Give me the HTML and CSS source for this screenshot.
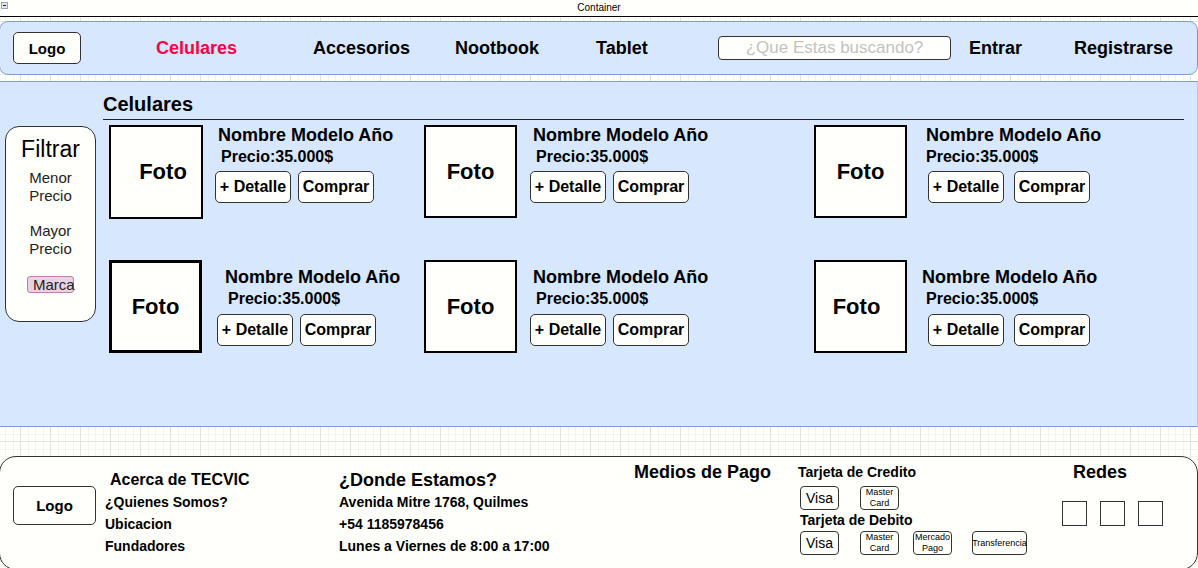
FILE: index.html
```html
<!DOCTYPE html>
<html lang="es">
<head>
<meta charset="utf-8">
<meta name="viewport" content="width=device-width, initial-scale=1">
<title>TECVIC - Celulares</title>
<link rel="stylesheet" href="styles.css">
</head>
<body>
<div class="page">
  <div class="titlebar">
    <svg class="collapse" viewBox="0 0 7 7" aria-hidden="true"><rect x="0.5" y="0.5" width="6" height="6" fill="#dfe6ee" stroke="#9aa8b8"/><path d="M2 3.5h3" stroke="#222"/></svg>
    <span>Container</span>
  </div>

  <header class="header">
    <a class="logo" href="#">Logo</a>
    <a class="nav-link nav-link--active" href="#">Celulares</a>
    <a class="nav-link" href="#">Accesorios</a>
    <a class="nav-link" href="#">Nootbook</a>
    <a class="nav-link" href="#">Tablet</a>
    <input class="search" type="text" aria-label="Buscar" placeholder="¿Que Estas buscando?">
    <a class="nav-link" href="#">Entrar</a>
    <a class="nav-link" href="#">Registrarse</a>
  </header>

  <main class="main">
    <aside class="filter">
      <h2 class="filter-title">Filtrar</h2>
      <button class="filter-option" type="button">Menor<br>Precio</button>
      <button class="filter-option" type="button">Mayor<br>Precio</button>
      <button class="filter-option filter-option--brand" type="button">Marca</button>
    </aside>
    <section class="catalog">
      <h1 class="catalog-title">Celulares</h1>
      <div class="products">
        <article class="card">
          <div class="photo photo--large photo--inset">Foto</div>
          <div class="info">
            <h3 class="name">Nombre Modelo Año</h3>
            <p class="price">Precio:35.000$</p>
            <div class="actions"><button class="btn" type="button">+ Detalle</button><button class="btn" type="button">Comprar</button></div>
          </div>
        </article>
        <article class="card">
          <div class="photo">Foto</div>
          <div class="info">
            <h3 class="name">Nombre Modelo Año</h3>
            <p class="price">Precio:35.000$</p>
            <div class="actions"><button class="btn" type="button">+ Detalle</button><button class="btn" type="button">Comprar</button></div>
          </div>
        </article>
        <article class="card card--wide">
          <div class="photo">Foto</div>
          <div class="info">
            <h3 class="name">Nombre Modelo Año</h3>
            <p class="price">Precio:35.000$</p>
            <div class="actions"><button class="btn" type="button">+ Detalle</button><button class="btn" type="button">Comprar</button></div>
          </div>
        </article>
        <article class="card card--lower card--indent">
          <div class="photo photo--heavy">Foto</div>
          <div class="info">
            <h3 class="name">Nombre Modelo Año</h3>
            <p class="price">Precio:35.000$</p>
            <div class="actions"><button class="btn" type="button">+ Detalle</button><button class="btn" type="button">Comprar</button></div>
          </div>
        </article>
        <article class="card card--lower">
          <div class="photo">Foto</div>
          <div class="info">
            <h3 class="name">Nombre Modelo Año</h3>
            <p class="price">Precio:35.000$</p>
            <div class="actions"><button class="btn" type="button">+ Detalle</button><button class="btn" type="button">Comprar</button></div>
          </div>
        </article>
        <article class="card card--wide card--lower card--outdent">
          <div class="photo">Foto</div>
          <div class="info">
            <h3 class="name">Nombre Modelo Año</h3>
            <p class="price">Precio:35.000$</p>
            <div class="actions"><button class="btn" type="button">+ Detalle</button><button class="btn" type="button">Comprar</button></div>
          </div>
        </article>
      </div>
    </section>
  </main>

  <footer class="footer">
    <a class="logo logo--footer" href="#">Logo</a>
    <nav class="about" aria-label="Acerca de TECVIC">
      <h2 class="about-title">Acerca de TECVIC</h2>
      <a class="footer-line" href="#">¿Quienes Somos?</a>
      <a class="footer-line" href="#">Ubicacion</a>
      <a class="footer-line" href="#">Fundadores</a>
    </nav>
    <address class="where">
      <h2 class="footer-title">¿Donde Estamos?</h2>
      <span class="footer-line">Avenida Mitre 1768, Quilmes</span>
      <span class="footer-line">+54 1185978456</span>
      <span class="footer-line">Lunes a Viernes de 8:00 a 17:00</span>
    </address>
    <h2 class="footer-title footer-title--top">Medios de Pago</h2>
    <div class="payments">
      <h3 class="pay-title">Tarjeta de Credito</h3>
      <div class="pay-row">
        <span class="pay pay--visa">Visa</span>
        <span class="pay">Master<br>Card</span>
      </div>
      <h3 class="pay-title pay-title--debit">Tarjeta de Debito</h3>
      <div class="pay-row">
        <span class="pay pay--visa">Visa</span>
        <span class="pay">Master<br>Card</span>
        <span class="pay">Mercado<br>Pago</span>
        <span class="pay pay--transfer">Transferencia</span>
      </div>
    </div>
    <div class="social">
      <h2 class="footer-title footer-title--top">Redes</h2>
      <div class="social-row">
        <a class="social-link" href="#" aria-label="Red social 1"></a>
        <a class="social-link" href="#" aria-label="Red social 2"></a>
        <a class="social-link" href="#" aria-label="Red social 3"></a>
      </div>
    </div>
  </footer>
</div>
</body>
</html>
```
FILE: styles.css
```css
:root {
  --paper: #fffffb;
  --blue: #d7e7fd;
  --blue-line: #7c9fd0;
  --ink: #000;
  --line: #333;
}

* { box-sizing: border-box; }

body {
  margin: 0;
  background: var(--paper);
  color: var(--ink);
  font-family: "Liberation Sans", Arial, sans-serif;
  white-space: nowrap;
}

h1, h2, h3, p { margin: 0; }
a { color: inherit; text-decoration: none; }
button, input { font: inherit; color: inherit; }

.page {
  min-height: 100vh;
  overflow: hidden;
  background-image:
    linear-gradient(90deg, #e2e2df 1px, transparent 1px),
    linear-gradient(#e2e2df 1px, transparent 1px),
    repeating-linear-gradient(90deg, #f3f3f0 0 1px, transparent 1px 8px, #f3f3f0 8px 9px, transparent 9px 15px),
    repeating-linear-gradient(#f3f3f0 0 1px, transparent 1px 8px, #f3f3f0 8px 9px, transparent 9px 15px);
  background-size: 30px 30px, 30px 30px, 30px 30px, 30px 30px;
  background-position: 20px 21px;
}

.titlebar {
  display: flex;
  justify-content: center;
  position: relative;
  height: 17px;
  border-bottom: 1px solid #000;
  background: var(--paper);
  font-size: 10px;
  line-height: 15px;
}

.collapse {
  position: absolute;
  left: 1px;
  top: 2px;
  width: 7px;
  height: 7px;
}

.header {
  display: grid;
  grid-template-columns: 143fr 157fr 142fr 141fr 122fr 251fr 105fr 111fr;
  align-items: center;
  height: 54px;
  margin: 4px 0 6px -1px;
  padding: 0 12px 0 13px;
  border: 1px solid var(--blue-line);
  border-radius: 9px;
  background: var(--blue);
}

.logo {
  display: flex;
  align-items: center;
  justify-content: center;
  width: 68px;
  height: 32px;
  border: 1px solid var(--line);
  border-radius: 5px;
  background: var(--paper);
  font-size: 15px;
  font-weight: bold;
}

.nav-link { font-size: 18px; font-weight: bold; }
.nav-link--active { color: #ff0045; }

.search {
  height: 24px;
  min-width: 0;
  margin-right: 18px;
  padding: 0 4px;
  border: 1px solid var(--line);
  border-radius: 4px;
  background: var(--paper);
  font-size: 17px;
  text-align: center;
}
.search::placeholder { color: #c3c3c0; opacity: 1; }

.main {
  display: grid;
  grid-template-columns: 91px 1fr;
  column-gap: 7px;
  align-items: start;
  min-height: 346px;
  padding: 0 13px 0 5px;
  border: 1px solid var(--blue-line);
  border-left: 0;
  border-right-color: #b4c8e4;
  background: var(--blue);
}

.filter {
  display: flex;
  flex-direction: column;
  align-items: center;
  min-height: 196px;
  margin-top: 44px;
  padding-top: 8px;
  border: 1px solid var(--line);
  border-radius: 14px;
  background: var(--paper);
}
.filter-title {
  margin-bottom: 6px;
  font-size: 23px;
  font-weight: normal;
  line-height: 28px;
}
.filter-option {
  margin-bottom: 17px;
  padding: 0;
  border: 0;
  background: none;
  font-size: 15px;
  line-height: 18px;
  color: #222;
}
.filter-option--brand {
  width: 47px;
  height: 17px;
  margin-top: 1px;
  padding-left: 5px;
  border: 1px solid #bb80ae;
  border-radius: 3px;
  background: #ead2e3;
  line-height: 15px;
}

.catalog-title {
  height: 38px;
  border-bottom: 1px solid #222;
  font-size: 20px;
  line-height: 44px;
}

.products {
  display: grid;
  grid-template-columns: 315fr 390fr 370fr;
  row-gap: 41px;
  padding: 5px 0 0 6px;
}

.card {
  display: grid;
  grid-template-columns: 106px 1fr;
  align-items: start;
}
.card--wide { grid-template-columns: 112px 1fr; }

.photo {
  display: flex;
  align-items: center;
  justify-content: center;
  width: 93px;
  height: 93px;
  border: 2px solid #000;
  background: var(--paper);
  font-size: 22px;
  font-weight: bold;
}
.photo--large { width: 94px; height: 94px; }
.photo--heavy { border-width: 3px; }
.photo--inset { padding-left: 14px; }

.name {
  padding-left: 3px;
  font-size: 18px;
  line-height: 20px;
}
.price {
  margin-bottom: 2px;
  padding-left: 6px;
  font-size: 16px;
  font-weight: bold;
  line-height: 24px;
}
.actions { display: flex; gap: 7px; }

.card--wide .name, .card--wide .price { padding-left: 0; }
.card--wide .actions { gap: 10px; padding-left: 2px; }
.card--lower .info { padding-top: 7px; }
.card--lower .price { margin-bottom: 3px; }
.card--indent .name { padding-left: 10px; }
.card--indent .price { padding-left: 13px; }
.card--indent .actions { padding-left: 2px; }
.card--outdent .photo { padding-right: 8px; }
.card--outdent .name { margin-left: -4px; }

.btn {
  width: 76px;
  height: 32px;
  padding: 0;
  border: 1px solid var(--line);
  border-radius: 5px;
  background: var(--paper);
  font-size: 16px;
  font-weight: bold;
}

.footer {
  display: grid;
  grid-template-columns: 92fr 234fr 295fr 164fr 264fr 123fr;
  align-items: start;
  min-height: 114px;
  margin: 29px 0 -2px -1px;
  padding: 0 12px 0 13px;
  border: 1px solid var(--line);
  border-radius: 17px;
  background: var(--paper);
}
.logo--footer {
  width: 83px;
  height: 39px;
  margin-top: 29px;
}
.about, .where {
  display: flex;
  flex-direction: column;
  padding-top: 12px;
  font-style: normal;
}
.about-title {
  padding-left: 5px;
  font-size: 16px;
  line-height: 22px;
}
.footer-title {
  font-size: 18px;
  line-height: 22px;
}
.footer-title--top { margin-top: 4px; }
.footer-line {
  font-size: 14px;
  font-weight: bold;
  line-height: 22px;
}
.pay-title {
  font-size: 14px;
  line-height: 20px;
}
.payments { padding-top: 5px; }
.pay-title--debit { padding-left: 2px; }
.pay-row {
  display: grid;
  grid-template-columns: 60px 53px 59px 55px;
  padding: 4px 0 0 2px;
}
.pay-title--debit + .pay-row { padding-top: 1px; }
.pay {
  display: flex;
  align-items: center;
  justify-content: center;
  width: 39px;
  height: 24px;
  border: 1px solid var(--line);
  border-radius: 4px;
  font-size: 9px;
  line-height: 11px;
  text-align: center;
}
.pay--transfer { width: 55px; }
.pay--visa { font-size: 14px; }

.social .footer-title { padding-left: 11px; }
.social-row {
  display: flex;
  gap: 13px;
  margin-top: 18px;
}
.social-link {
  width: 25px;
  height: 25px;
  border: 1px solid var(--line);
}
```
